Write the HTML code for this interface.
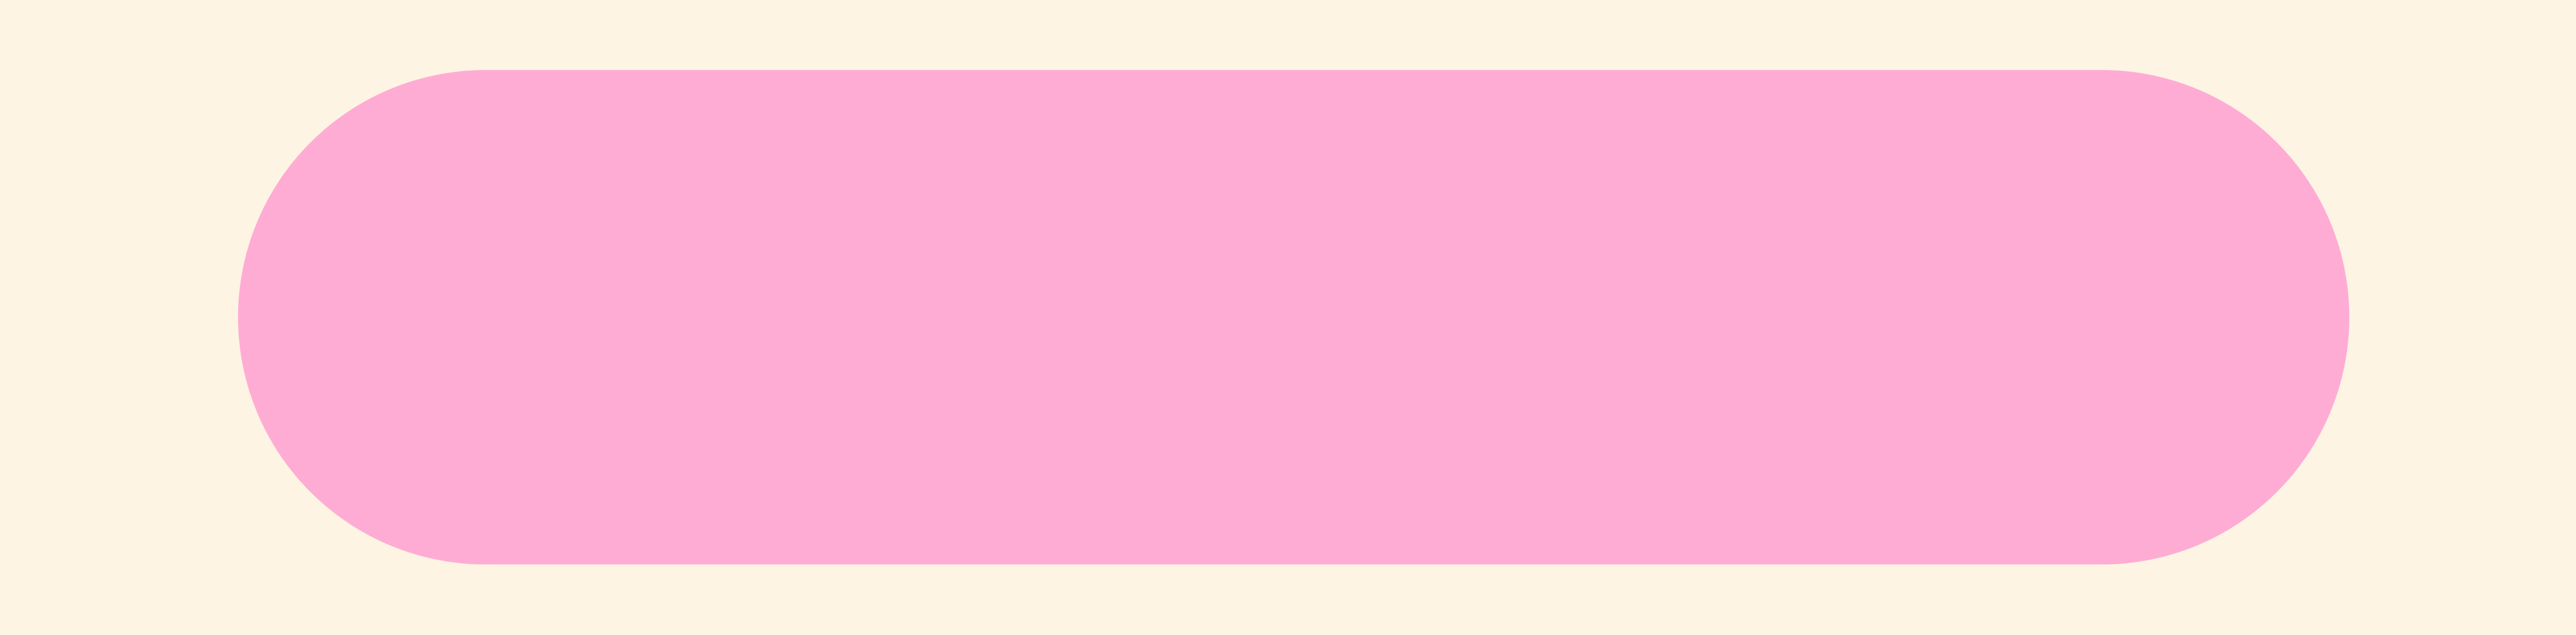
<!DOCTYPE html>
<html><head><style>
html,body{margin:0;padding:0;background:#fdf4e4;}
body{width:100vw;height:100vh;position:relative;overflow:hidden;}
.pill{position:absolute;left:9.233vw;top:11.03vh;width:81.97vw;height:77.86vh;border-radius:9999px;background:#ffacd4;}
</style></head><body><div class="pill"></div></body></html>
